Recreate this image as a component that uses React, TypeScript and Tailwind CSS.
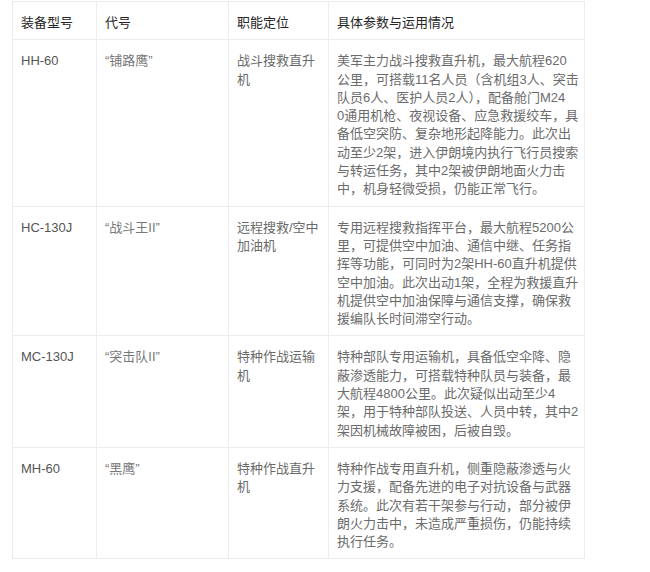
const rows = [
  {
    model: 'HH-60',
    code: '“铺路鹰”',
    role: ['战斗搜救直升', '机'],
    detail: [
      '美军主力战斗搜救直升机，最大航程620',
      '公里，可搭载11名人员（含机组3人、突击',
      '队员6人、医护人员2人），配备舱门M24',
      '0通用机枪、夜视设备、应急救援绞车，具',
      '备低空突防、复杂地形起降能力。此次出',
      '动至少2架，进入伊朗境内执行飞行员搜索',
      '与转运任务，其中2架被伊朗地面火力击',
      '中，机身轻微受损，仍能正常飞行。',
    ],
  },
  {
    model: 'HC-130J',
    code: '“战斗王II”',
    role: ['远程搜救/空中', '加油机'],
    detail: [
      '专用远程搜救指挥平台，最大航程5200公',
      '里，可提供空中加油、通信中继、任务指',
      '挥等功能，可同时为2架HH-60直升机提供',
      '空中加油。此次出动1架，全程为救援直升',
      '机提供空中加油保障与通信支撑，确保救',
      '援编队长时间滞空行动。',
    ],
  },
  {
    model: 'MC-130J',
    code: '“突击队II”',
    role: ['特种作战运输', '机'],
    detail: [
      '特种部队专用运输机，具备低空伞降、隐',
      '蔽渗透能力，可搭载特种队员与装备，最',
      '大航程4800公里。此次疑似出动至少4',
      '架，用于特种部队投送、人员中转，其中2',
      '架因机械故障被困，后被自毁。',
    ],
  },
  {
    model: 'MH-60',
    code: '“黑鹰”',
    role: ['特种作战直升', '机'],
    detail: [
      '特种作战专用直升机，侧重隐蔽渗透与火',
      '力支援，配备先进的电子对抗设备与武器',
      '系统。此次有若干架参与行动，部分被伊',
      '朗火力击中，未造成严重损伤，仍能持续',
      '执行任务。',
    ],
  },
];

function Lines({ lines }: { lines: string[] }) {
  return (
    <>
      {lines.map((l, i) => (
        <span key={i} className="block whitespace-nowrap">
          {l}
        </span>
      ))}
    </>
  );
}

const cell = 'border border-[#ededed] pt-3 pb-[7px] pl-2 pr-2 align-top';

export default function App() {
  return (
    <div
      className="min-h-[572px] bg-white pt-px"
      style={{ fontFamily: '"Liberation Sans", "Noto Sans CJK SC", sans-serif' }}
    >
      <table className="ml-3 w-[572px] table-fixed border-collapse text-left text-[13px] leading-[18.3px]">
        <colgroup>
          <col className="w-[84px]" />
          <col className="w-[132px]" />
          <col className="w-[100px]" />
          <col className="w-[256px]" />
        </colgroup>
        <thead>
          <tr className="text-[#262626]">
            <th className={cell + ' font-normal'}>装备型号</th>
            <th className={cell + ' font-normal'}>代号</th>
            <th className={cell + ' font-normal'}>职能定位</th>
            <th className={cell + ' font-normal'}>具体参数与运用情况</th>
          </tr>
        </thead>
        <tbody>
          {rows.map((r) => (
            <tr key={r.model}>
              <td className={cell + ' text-[#555]'}>{r.model}</td>
              <td className={cell + ' text-[#777]'}>{r.code}</td>
              <td className={cell + ' text-[#6b6b6b]'}>
                <Lines lines={r.role} />
              </td>
              <td className={cell + ' text-[#6b6b6b]'}>
                <Lines lines={r.detail} />
              </td>
            </tr>
          ))}
        </tbody>
      </table>
    </div>
  );
}
